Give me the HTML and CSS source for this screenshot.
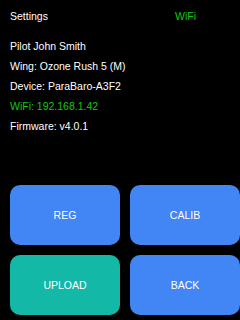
FILE: index.html
```html
<!DOCTYPE html>
<html lang="en">
<head>
    <meta charset="UTF-8">
    <meta name="viewport" content="width=device-width, initial-scale=1.0">
    <title>Settings</title>
    <link rel="stylesheet" href="styles.css">
</head>
<body>
    <div class="screen">
        <div class="top-bar">
            <span class="title">Settings</span>
            <span class="status">WiFi</span>
        </div>

        <ul class="info-list">
            <li>Pilot John Smith</li>
            <li>Wing: Ozone Rush 5 (M)</li>
            <li>Device: ParaBaro-A3F2</li>
            <li class="wifi-line">WiFi: 192.168.1.42</li>
            <li>Firmware: v4.0.1</li>
        </ul>

        <div class="button-grid">
            <button class="btn">REG</button>
            <button class="btn">CALIB</button>
            <button class="btn btn-upload">UPLOAD</button>
            <button class="btn">BACK</button>
        </div>
    </div>
</body>
</html>
```

FILE: styles.css
```css
body {
    margin: 0;
    background-color: #000;
    font-family: "Liberation Sans", Arial, sans-serif;
    font-size: 10.5px;
    color: #fff;
}

.screen {
    width: 240px;
    height: 320px;
    display: flex;
    flex-direction: column;
    box-sizing: border-box;
    padding-bottom: 5px;
}

.top-bar {
    display: grid;
    grid-template-columns: 165px auto;
    padding: 6px 10px 0 10px;
    line-height: 20px;
}

.status {
    color: #10c810;
}

.info-list {
    list-style-type: none;
    margin: 10px 0 0 0;
    padding: 0 10px;
    line-height: 20px;
}

.wifi-line {
    color: #10c810;
}

.button-grid {
    margin-top: auto;
    display: grid;
    grid-template-columns: 110px 110px;
    grid-auto-rows: 60px;
    gap: 10px;
    padding-left: 10px;
}

.btn {
    background-color: #4285f4;
    border: none;
    border-radius: 10px;
    color: #fff;
    font-family: inherit;
    font-size: 10.5px;
    padding: 0;
}

.btn-upload {
    background-color: #14b8a6;
}
```
